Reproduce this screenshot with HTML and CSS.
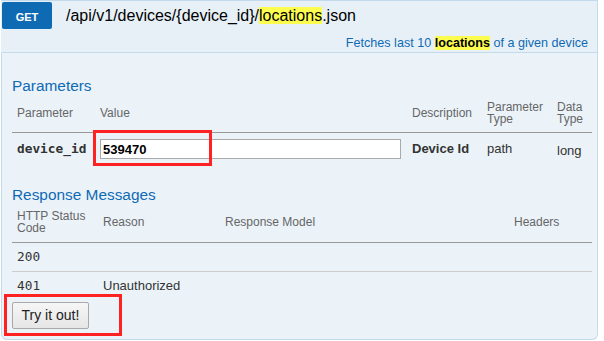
FILE: index.html
```html
<!DOCTYPE html>
<html>

<head>
    <title>Swagger - locations</title>
    <link rel="stylesheet" href="styles.css">
</head>

<body>
    <div class="endpoint">
        <div class="heading">
            <h3>
                <span class="method">GET</span>
                <span class="path">/api/v1/devices/{device_id}/<span class="hl">locations</span>.json</span>
            </h3>
            <p class="summary">Fetches last 10 <span class="hl strong">locations</span> of a given device</p>
        </div>

        <div class="content">
            <h4>Parameters</h4>
            <table class="params">
                <colgroup>
                    <col style="width: 83px">
                    <col style="width: 312px">
                    <col style="width: 75px">
                    <col style="width: 70px">
                    <col>
                </colgroup>
                <thead>
                    <tr>
                        <th>Parameter</th>
                        <th>Value</th>
                        <th>Description</th>
                        <th>Parameter Type</th>
                        <th>Data Type</th>
                    </tr>
                </thead>
                <tbody>
                    <tr>
                        <td class="code bold">device_id</td>
                        <td><input type="text" class="param-input" value="539470"></td>
                        <td class="bold">Device Id</td>
                        <td>path</td>
                        <td class="type">long</td>
                    </tr>
                </tbody>
            </table>

            <h4>Response Messages</h4>
            <table class="responses">
                <colgroup>
                    <col style="width: 86px">
                    <col style="width: 122px">
                    <col style="width: 289px">
                    <col>
                </colgroup>
                <thead>
                    <tr>
                        <th>HTTP Status Code</th>
                        <th>Reason</th>
                        <th>Response Model</th>
                        <th>Headers</th>
                    </tr>
                </thead>
                <tbody>
                    <tr>
                        <td class="code">200</td>
                        <td></td>
                        <td></td>
                        <td></td>
                    </tr>
                    <tr>
                        <td class="code">401</td>
                        <td>Unauthorized</td>
                        <td></td>
                        <td></td>
                    </tr>
                </tbody>
            </table>

            <div class="actions">
                <button type="button" class="try-btn">Try it out!</button>
            </div>
        </div>

        <div class="mark-box input-mark"></div>
        <div class="mark-box button-mark"></div>
    </div>
</body>

</html>
```

FILE: styles.css
```css
body {
    margin: 0;
    font-family: "Liberation Sans", Arial, sans-serif;
    color: #000;
    background: #fff;
}

.endpoint {
    position: relative;
    width: 597px;
    margin-left: 1px;
}

/* heading bar */
.heading {
    background-color: #e7f0f7;
    border: 1px solid #c3d9ec;
    border-left-color: #e7f0f7;
}

.heading h3 {
    display: flex;
    align-items: center;
    height: 27px;
    margin: 1px 0 0 0;
    font-weight: normal;
}

.method {
    display: flex;
    align-items: center;
    justify-content: center;
    box-sizing: border-box;
    width: 50px;
    height: 27px;
    padding-top: 2px;
    background-color: #0f6ab4;
    color: #fff;
    font-size: 11px;
    font-weight: bold;
    border-radius: 2px;
}

.path {
    margin-left: 14px;
    font-size: 16px;
    line-height: 18px;
    color: #000;
}

.hl {
    background-color: #fdfd50;
}

.summary {
    margin: 7px 9px 1px 0;
    text-align: right;
    font-size: 12.6px;
    line-height: 15px;
    color: #0f6ab4;
}

.summary .strong {
    color: #000;
    font-weight: bold;
}

/* content */
.content {
    background-color: #ebf3f9;
    border: 1px solid #c3d9ec;
    border-top: none;
    border-radius: 0 0 6px 6px;
    padding: 3px 5px 10px 10px;
}

.content h4 {
    margin: 21px 0 0 0;
    font-size: 15.4px;
    line-height: 18px;
    font-weight: normal;
    color: #0f6ab4;
}

table {
    width: 100%;
    table-layout: fixed;
    border-collapse: collapse;
}

th {
    padding: 7px 5px;
    text-align: left;
    vertical-align: middle;
    font-size: 12px;
    line-height: 11.5px;
    font-weight: normal;
    color: #666;
    border-bottom: 1px solid #999;
}

.responses th {
    padding-bottom: 8px;
}

td {
    padding: 6px 5px;
    vertical-align: middle;
    font-size: 13px;
    line-height: 16px;
    color: #333;
}

.code {
    font-family: "DejaVu Sans Mono", "Liberation Mono", monospace;
    font-size: 12.8px;
}

.bold {
    font-weight: bold;
}

.type {
    padding-top: 10px;
}

.param-input {
    box-sizing: border-box;
    width: 301px;
    height: 20px;
    margin: 0;
    padding: 0 2px;
    border: 1px solid #aaa;
    background: #fff;
    font-family: "Liberation Sans", Arial, sans-serif;
    font-size: 13px;
    font-weight: bold;
    color: #000;
}

.responses tbody tr:first-child td {
    border-bottom: 1px solid #ccc;
}

.actions {
    margin-top: 2px;
}

.try-btn {
    height: 27px;
    margin: 0;
    padding: 4px 8.5px;
    border: 1px solid #a9a9a9;
    border-radius: 2px;
    background: linear-gradient(#f6f6f6, #e6e6e6);
    font-family: "Liberation Sans", Arial, sans-serif;
    font-size: 14px;
    line-height: 17px;
    color: #222;
}

/* red annotation boxes drawn over the form */
.mark-box {
    position: absolute;
    box-sizing: border-box;
    border: 3px solid #f22;
}

.input-mark {
    left: 92px;
    top: 130px;
    width: 119px;
    height: 36px;
}

.button-mark {
    left: 3px;
    top: 294px;
    width: 118px;
    height: 42px;
}
```
